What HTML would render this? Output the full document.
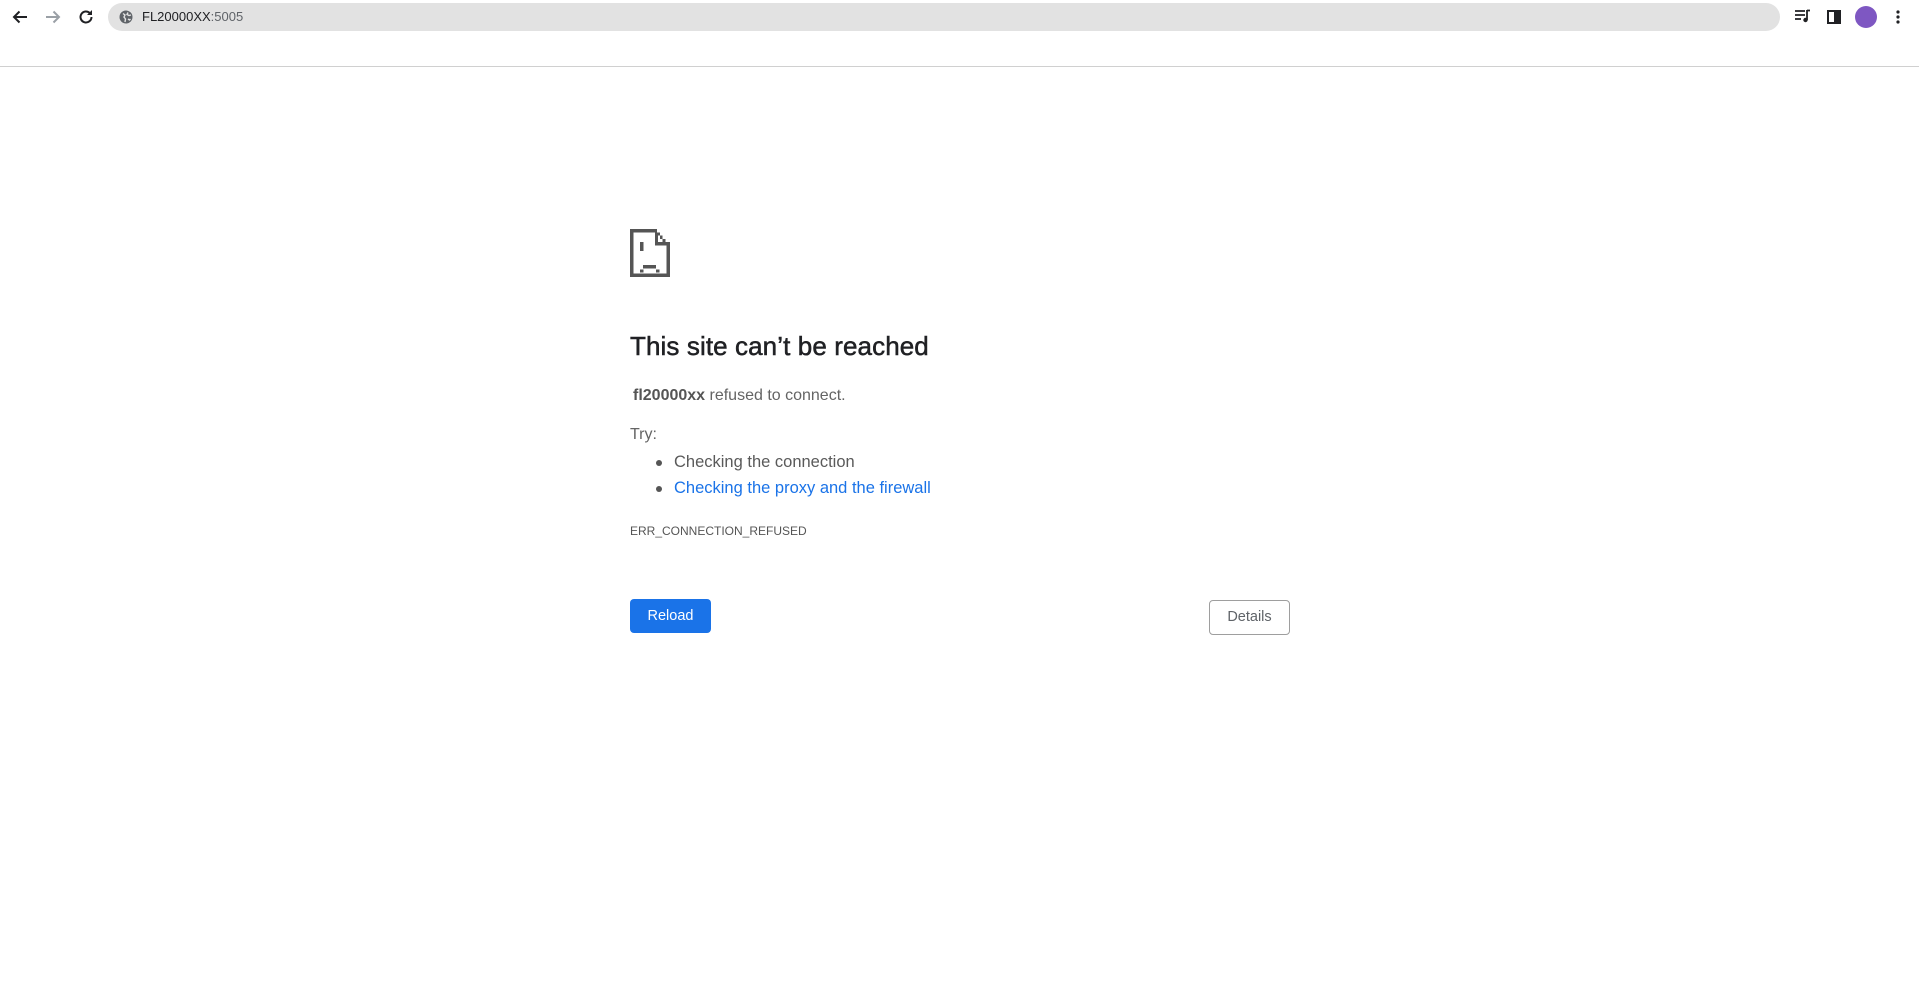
<!DOCTYPE html>
<html><head><meta charset="utf-8"><style>
*{margin:0;padding:0;box-sizing:border-box}
body{width:1919px;height:995px;background:#fff;font-family:"Liberation Sans",Arial,sans-serif;position:relative;overflow:hidden}
.top{position:absolute;left:0;top:0;width:1919px;height:67px;border-bottom:1px solid #d0d0d0;background:#fff}
.bar{position:absolute;left:108px;top:3px;width:1672px;height:28px;border-radius:14px;background:#e2e2e2}
.url{position:absolute;left:142px;top:9px;font-size:13px;color:#202124}
.url span{color:#5f6368}
.abs{position:absolute}
h1{position:absolute;left:630px;top:331px;font-size:26px;font-weight:normal;color:#202124;letter-spacing:0.1px;-webkit-text-stroke:0.5px #202124}
.t{position:absolute;color:#646464;font-size:16px}
ul{position:absolute;left:630px;top:449px;list-style:none}
li{position:relative;padding-left:44px;font-size:16.5px;line-height:26px;color:#5a5a5a}
li:before{content:"";position:absolute;left:26px;top:11px;width:6px;height:6px;border-radius:50%;background:#555}
li.a{color:#1a73e8}
.btn{position:absolute;font-size:14.5px;text-align:center;border-radius:4px}
</style></head><body>
<div class="top">
 <svg class="abs" style="left:10px;top:7px" width="20" height="20" viewBox="0 0 20 20"><path d="M17 10H4M9.5 4.5L4 10l5.5 5.5" stroke="#202124" stroke-width="2" fill="none"/></svg>
 <svg class="abs" style="left:43px;top:7px" width="20" height="20" viewBox="0 0 20 20"><path d="M3 10h13M10.5 4.5L16 10l-5.5 5.5" stroke="#9aa0a6" stroke-width="2" fill="none"/></svg>
 <svg class="abs" style="left:76px;top:7px" width="20" height="20" viewBox="0 0 20 20"><path d="M15.5 10a5.5 5.5 0 1 1-1.6-3.9" stroke="#202124" stroke-width="2" fill="none"/><path d="M16 3v5h-5z" fill="#202124"/></svg>
 <div class="bar"></div>
 <svg class="abs" style="left:119px;top:10px" width="14" height="14" viewBox="0 0 14 14"><circle cx="7" cy="7" r="6.5" fill="#5f6368"/><path d="M4 3.5l2 1.5-1 2 1.5 2-.5 3M9 2.5l-1 2 2 1 2-.5M9 9l1.5 1 1-1" stroke="#e2e2e2" stroke-width="1.4" fill="none"/></svg>
 <div class="url">FL20000XX<span>:5005</span></div>
 <svg class="abs" style="left:1794px;top:9px" width="18" height="14" viewBox="0 0 18 14"><path d="M1 2h10M1 6h10M1 10h6" stroke="#202124" stroke-width="1.8"/><path d="M13 1v10" stroke="#202124" stroke-width="1.8"/><circle cx="11.5" cy="11" r="2.2" fill="#202124"/><path d="M13 1.5h3" stroke="#202124" stroke-width="1.8"/></svg>
 <div class="abs" style="left:1827px;top:10px;width:14px;height:14px;border:2px solid #202124;background:linear-gradient(90deg,#fff 50%,#202124 50%)"></div>
 <div class="abs" style="left:1855px;top:6px;width:22px;height:22px;border-radius:50%;background:#7e57c2"></div>
 <svg class="abs" style="left:1895px;top:9px" width="6" height="16" viewBox="0 0 6 16"><circle cx="3" cy="3" r="1.6" fill="#202124"/><circle cx="3" cy="8" r="1.6" fill="#202124"/><circle cx="3" cy="13" r="1.6" fill="#202124"/></svg>
</div>
<svg class="abs" style="left:630px;top:229px" width="40" height="48" viewBox="0 0 43 44" preserveAspectRatio="none" shape-rendering="crispEdges" fill="#555">
<rect x="0" y="0" width="3.5" height="44"/><rect x="0" y="41" width="43" height="3"/><rect x="39.5" y="15" width="3.5" height="29"/><rect x="0" y="0" width="29" height="3"/>
<rect x="29" y="3" width="3" height="3"/><rect x="32" y="6" width="3" height="3"/><rect x="35" y="9" width="3" height="3"/><rect x="38" y="12" width="3" height="3"/>
<rect x="27" y="3" width="3" height="12"/><rect x="27" y="12" width="16" height="3"/>
<rect x="11" y="12" width="3.5" height="8"/>
<rect x="11" y="37" width="3.5" height="3"/><rect x="14" y="33" width="14" height="3"/><rect x="28" y="37" width="3.5" height="3"/>
</svg>
<h1>This site can’t be reached</h1>
<div class="t" style="left:633px;top:387px"><b style="color:#555">fl20000xx</b> refused to connect.</div>
<div class="t" style="left:630px;top:426px">Try:</div>
<ul><li>Checking the connection</li><li class="a">Checking the proxy and the firewall</li></ul>
<div class="t" style="left:630px;top:524px;font-size:12px;color:#555">ERR_CONNECTION_REFUSED</div>
<div class="btn" style="left:630px;top:599px;width:81px;height:34px;line-height:34px;background:#1a73e8;color:#fff">Reload</div>
<div class="btn" style="left:1209px;top:600px;width:81px;height:35px;line-height:33px;border:1px solid #9e9e9e;color:#5f6368">Details</div>
</body></html>
